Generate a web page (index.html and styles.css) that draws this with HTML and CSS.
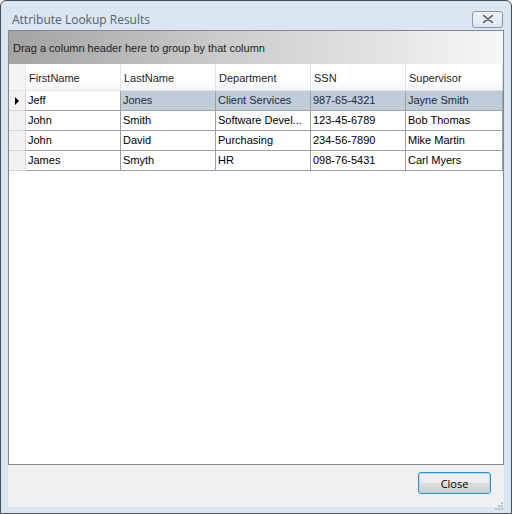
FILE: index.html
```html
<!DOCTYPE html>
<html>
<head>
<meta charset="utf-8">
<link rel="stylesheet" href="styles.css">
</head>
<body>
<div class="window">
  <div class="titlebar">
    <span class="title">Attribute Lookup Results</span>
    <button class="xbtn" aria-label="Close">
      <svg width="14" height="10" viewBox="0 0 14 10">
        <path d="M2 1 L12 9 M12 1 L2 9" stroke="#ffffff" stroke-width="4" stroke-linecap="round"/>
        <path d="M2.5 1.5 L11.5 8.5 M11.5 1.5 L2.5 8.5" stroke="#5f6b7a" stroke-width="1.8" stroke-linecap="round"/>
      </svg>
    </button>
  </div>
  <div class="client">
    <div class="grid">
      <div class="grouppanel">Drag a column header here to group by that column</div>
      <div class="header">
        <div class="sel hsel"></div>
        <div class="hcell">FirstName</div>
        <div class="hcell">LastName</div>
        <div class="hcell">Department</div>
        <div class="hcell">SSN</div>
        <div class="hcell last">Supervisor</div>
      </div>
      <div class="row selected">
        <div class="sel"><span class="arrow"></span></div>
        <div class="cell current">Jeff</div>
        <div class="cell">Jones</div>
        <div class="cell">Client Services</div>
        <div class="cell">987-65-4321</div>
        <div class="cell">Jayne Smith</div>
      </div>
      <div class="row">
        <div class="sel"></div>
        <div class="cell">John</div>
        <div class="cell">Smith</div>
        <div class="cell" title="Software Development">Software Devel...</div>
        <div class="cell">123-45-6789</div>
        <div class="cell">Bob Thomas</div>
      </div>
      <div class="row">
        <div class="sel"></div>
        <div class="cell">John</div>
        <div class="cell">David</div>
        <div class="cell">Purchasing</div>
        <div class="cell">234-56-7890</div>
        <div class="cell">Mike Martin</div>
      </div>
      <div class="row">
        <div class="sel"></div>
        <div class="cell">James</div>
        <div class="cell">Smyth</div>
        <div class="cell">HR</div>
        <div class="cell">098-76-5431</div>
        <div class="cell">Carl Myers</div>
      </div>
    </div>
    <div class="footer">
      <button class="closebtn">Close</button>
    </div>
    <div class="grip">
      <svg width="10" height="10" viewBox="0 0 10 10">
        <rect x="7" y="1" width="2" height="2" fill="#b8bcc2"/>
        <rect x="4" y="4" width="2" height="2" fill="#b8bcc2"/>
        <rect x="7" y="4" width="2" height="2" fill="#b8bcc2"/>
        <rect x="1" y="7" width="2" height="2" fill="#b8bcc2"/>
        <rect x="4" y="7" width="2" height="2" fill="#b8bcc2"/>
        <rect x="7" y="7" width="2" height="2" fill="#b8bcc2"/>
      </svg>
    </div>
  </div>
</div>
</body>
</html>
```
FILE: styles.css
```css
html, body {
  margin: 0;
  padding: 0;
  background: #ffffff;
}
.window {
  width: 512px;
  height: 514px;
  box-sizing: border-box;
  border: 1px solid #4a4f57;
  border-radius: 6px 6px 0 0;
  background: #dbe6f3;
  display: flex;
  flex-direction: column;
  overflow: hidden;
}
.titlebar {
  height: 29px;
  display: flex;
  align-items: center;
  justify-content: space-between;
  padding: 0 8px 0 11px;
}
.title {
  font-family: "Open Sans", "Noto Sans", sans-serif;
  font-size: 12px;
  color: #545e6a;
  margin-top: 8px;
}
.xbtn {
  width: 31px;
  height: 17px;
  margin-top: 7px;
  padding: 0;
  border: 1px solid #8a96a5;
  border-radius: 3px;
  background: linear-gradient(#eef3f9, #dde6f0);
  display: flex;
  align-items: center;
  justify-content: center;
}
.client {
  margin: 0 7px 6px 7px;
  flex: 1;
  background: #f0f0f0;
  position: relative;
  display: flex;
  flex-direction: column;
}
.grid {
  height: 435px;
  box-sizing: border-box;
  border: 1px solid #828790;
  background: #ffffff;
  font-family: "Liberation Sans", Arial, sans-serif;
  font-size: 11px;
  color: #000;
}
.grouppanel {
  height: 33px;
  box-sizing: border-box;
  padding: 0 0 0 4px;
  display: flex;
  align-items: center;
  background: linear-gradient(to right, #a3a3a3 0%, #cdcdcd 45%, #f6f6f6 100%);
  color: #1e1e1e;
}
.header {
  display: flex;
  height: 27px;
  box-sizing: border-box;
  background: linear-gradient(#ffffff, #ffffff 60%, #f4f5f7);
  border-bottom: 1px solid #e2e4e8;
}
.sel {
  width: 17px;
  flex: none;
  box-sizing: border-box;
  background: #f2f2f2;
  border-right: 1px solid #d5d5d5;
  border-bottom: 1px solid #d5d5d5;
  display: flex;
  align-items: center;
  justify-content: center;
}
.hsel {
  background: #f4f4f4;
  border-bottom: none;
  border-right: 1px solid #e6e6e6;
}
.hcell {
  width: 95px;
  flex: none;
  box-sizing: border-box;
  padding: 1px 0 0 3px;
  display: flex;
  align-items: center;
  border-right: 1px solid #e3e3e3;
  color: #1e1e1e;
}
.hcell.last {
  width: 97px;
}
.row {
  display: flex;
  height: 20px;
}
.cell {
  width: 95px;
  flex: none;
  box-sizing: border-box;
  padding: 0 0 0 2px;
  line-height: 19px;
  border-right: 1px solid #a0a0a0;
  border-bottom: 1px solid #a0a0a0;
  white-space: nowrap;
  overflow: hidden;
}
.cell:last-child {
  width: 97px;
}
.row.selected .cell {
  background: #bfcddb;
  color: #1a2a3a;
}
.row.selected .cell.current {
  background: #ffffff;
  color: #000;
}
.arrow {
  width: 0;
  height: 0;
  border-top: 4px solid transparent;
  border-bottom: 4px solid transparent;
  border-left: 4px solid #000;
  margin-left: 0;
}
.footer {
  flex: 1;
  display: flex;
  justify-content: flex-end;
  align-items: flex-start;
  padding: 7px 13px 0 0;
}
.closebtn {
  width: 73px;
  height: 22px;
  box-sizing: border-box;
  border: 1px solid #3c8dcc;
  border-radius: 3px;
  background: linear-gradient(#f2f2f2 0%, #ebebeb 50%, #dddddd 51%, #cfcfcf 100%);
  box-shadow: inset 0 0 0 1px #a6dcf5;
  font-family: "Open Sans", "Noto Sans", sans-serif;
  font-size: 11px;
  color: #000;
  padding: 0;
}
.grip {
  position: absolute;
  right: 0;
  bottom: 0;
  width: 10px;
  height: 10px;
}
```
